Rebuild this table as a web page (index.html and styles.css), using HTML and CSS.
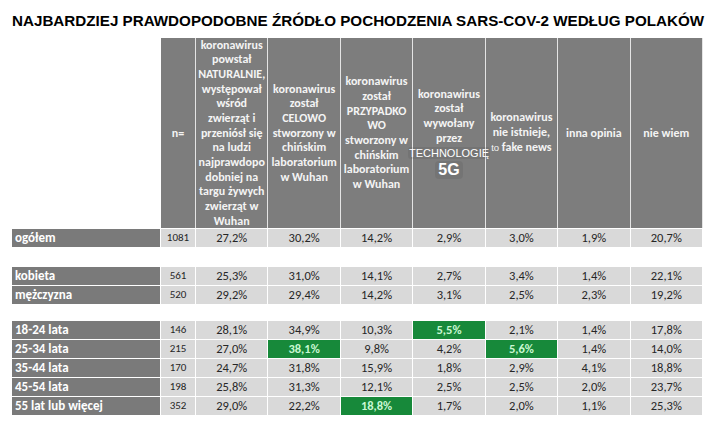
FILE: index.html
```html
<!DOCTYPE html>
<html lang="pl">
<head>
<meta charset="utf-8">
<title>Źródło pochodzenia SARS-COV-2</title>
<link rel="stylesheet" href="styles.css">
</head>
<body>
<h1 class="title">NAJBARDZIEJ PRAWDOPODOBNE ŹRÓDŁO POCHODZENIA SARS-COV-2 WEDŁUG POLAKÓW</h1>
<div class="grid">
  <div class="corner"></div>
  <div class="hd"><div class="hd-text">n=</div></div>
  <div class="hd"><div class="hd-text">koronawirus<br>powstał<br>NATURALNIE,<br>występował<br>wśród<br>zwierząt i<br>przeniósł się<br>na ludzi<br>najprawdopo<br>dobniej na<br>targu żywych<br>zwierząt w<br>Wuhan</div></div>
  <div class="hd"><div class="hd-text">koronawirus<br>został<br>CELOWO<br>stworzony w<br>chińskim<br>laboratorium<br>w Wuhan</div></div>
  <div class="hd"><div class="hd-text">koronawirus<br>został<br>PRZYPADKO<br>WO<br>stworzony w<br>chińskim<br>laboratorium<br>w Wuhan</div></div>
  <div class="hd hd-5g"><div class="hd-text">koronawirus<br>został<br>wywołany<br>przez<br><span class="tech">TECHNOLOGIĘ</span><br><span class="fiveg">5G</span></div></div>
  <div class="hd"><div class="hd-text">koronawirus<br>nie istnieje,<br><span class="to">to</span> fake news</div></div>
  <div class="hd"><div class="hd-text">inna opinia</div></div>
  <div class="hd"><div class="hd-text">nie wiem</div></div>

  <div class="lbl">ogółem</div><div class="n">1081</div>
  <div class="v">27,2%</div><div class="v">30,2%</div><div class="v">14,2%</div><div class="v">2,9%</div><div class="v">3,0%</div><div class="v">1,9%</div><div class="v">20,7%</div>

  <div class="spacer"></div>

  <div class="lbl">kobieta</div><div class="n">561</div>
  <div class="v">25,3%</div><div class="v">31,0%</div><div class="v">14,1%</div><div class="v">2,7%</div><div class="v">3,4%</div><div class="v">1,4%</div><div class="v">22,1%</div>

  <div class="lbl">mężczyzna</div><div class="n">520</div>
  <div class="v">29,2%</div><div class="v">29,4%</div><div class="v">14,2%</div><div class="v">3,1%</div><div class="v">2,5%</div><div class="v">2,3%</div><div class="v">19,2%</div>

  <div class="spacer"></div>

  <div class="lbl">18-24 lata</div><div class="n">146</div>
  <div class="v">28,1%</div><div class="v">34,9%</div><div class="v">10,3%</div><div class="v hi">5,5%</div><div class="v">2,1%</div><div class="v">1,4%</div><div class="v">17,8%</div>

  <div class="lbl">25-34 lata</div><div class="n">215</div>
  <div class="v">27,0%</div><div class="v hi">38,1%</div><div class="v">9,8%</div><div class="v">4,2%</div><div class="v hi">5,6%</div><div class="v">1,4%</div><div class="v">14,0%</div>

  <div class="lbl">35-44 lata</div><div class="n">170</div>
  <div class="v">24,7%</div><div class="v">31,8%</div><div class="v">15,9%</div><div class="v">1,8%</div><div class="v">2,9%</div><div class="v">4,1%</div><div class="v">18,8%</div>

  <div class="lbl">45-54 lata</div><div class="n">198</div>
  <div class="v">25,8%</div><div class="v">31,3%</div><div class="v">12,1%</div><div class="v">2,5%</div><div class="v">2,5%</div><div class="v">2,0%</div><div class="v">23,7%</div>

  <div class="lbl">55 lat lub więcej</div><div class="n">352</div>
  <div class="v">29,0%</div><div class="v">22,2%</div><div class="v hi">18,8%</div><div class="v">1,7%</div><div class="v">2,0%</div><div class="v">1,1%</div><div class="v">25,3%</div>
</div>
</body>
</html>
```

FILE: styles.css
```css
html, body {
  margin: 0;
  padding: 0;
  background: #ffffff;
}

body {
  width: 718px;
  height: 435px;
  overflow: hidden;
  font-family: Carlito, Calibri, Lato, "Noto Sans", sans-serif;
}

.title {
  margin: 12px 0 8px 12px;
  font-family: "Liberation Sans", Arial, sans-serif;
  font-weight: bold;
  font-size: 15.2px;
  line-height: 18px;
  color: #000000;
  white-space: nowrap;
}

.grid {
  margin-left: 12px;
  width: 690px;
  display: grid;
  grid-template-columns: 148px 34px repeat(7, minmax(0, 1fr));
  grid-template-rows: 190px 18px 18px 18px 18px 15px 18px 18px 18px 18px 18px;
  gap: 1px;
}

.corner {
  background: #ffffff;
}

.hd {
  background: #7d7d7d;
  color: #f4f4f4;
  font-weight: bold;
  font-size: 12px;
  line-height: 14.67px;
  text-align: center;
  white-space: nowrap;
  display: flex;
  align-items: center;
  justify-content: center;
  box-shadow: 1px 0 0 #e4e4e4;
}

.hd-text {
  text-align: center;
}

.hd-5g {
  position: relative;
  z-index: 1;
}

.tech {
  font-family: "Liberation Sans", Arial, sans-serif;
  font-weight: normal;
  font-size: 11px;
  background: rgba(0, 0, 0, 0.07);
  border-radius: 3px;
  padding: 0 1px;
  color: #ffffff;
}

.fiveg {
  display: inline-block;
  margin-top: 1px;
  font-family: "Liberation Sans", Arial, sans-serif;
  font-weight: bold;
  font-size: 16px;
  line-height: 18px;
  background: rgba(0, 0, 0, 0.07);
  border-radius: 4px;
  padding: 0 3px;
  color: #ffffff;
}

.to {
  font-family: "Liberation Sans", Arial, sans-serif;
  font-weight: normal;
  font-size: 9.5px;
}

.lbl {
  background: #7a7a7a;
  color: #ffffff;
  font-weight: bold;
  font-size: 13px;
  line-height: 18px;
  padding-left: 3px;
  white-space: nowrap;
}

.n {
  background: #d9d9d9;
  color: #262626;
  font-size: 11px;
  line-height: 18px;
  text-align: center;
}

.v {
  background: #d9d9d9;
  color: #262626;
  font-size: 12.5px;
  line-height: 18px;
  text-align: center;
}

.v.hi {
  background: #17893a;
  color: #c9f7d2;
  font-weight: bold;
}

.spacer {
  grid-column: 1 / -1;
}
```
